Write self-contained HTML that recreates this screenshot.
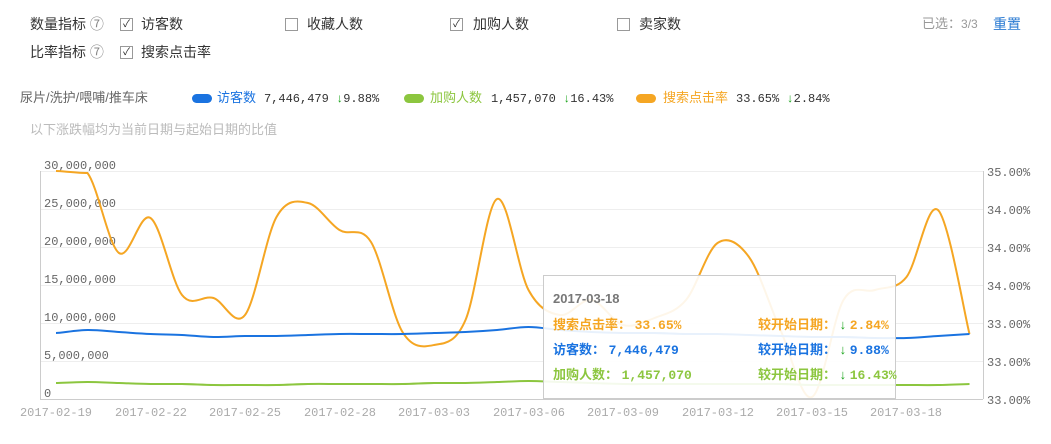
<!DOCTYPE html>
<html><head><meta charset="utf-8"><style>
body{margin:0;width:1051px;height:444px;background:#fff;overflow:hidden;position:relative;font-family:"Liberation Sans","Noto Sans CJK SC",sans-serif;}
.a{position:absolute;white-space:nowrap;font-size:14px;color:#333;line-height:16px}
.l{font-size:13px}
.cb{position:absolute;width:11px;height:11px;border:1px solid #999;background:#fff;font-size:10px;line-height:11px;text-align:center;color:#222}
.m{font-family:"Liberation Mono",monospace;font-size:12px}
.pill{position:absolute;width:20px;height:9px;border-radius:5px}
.g{color:#1aa31a}
</style></head><body>
<div class="a" style="left:30px;top:16px">数量指标 <span style="color:#888">⑦</span></div>
<div class="cb" style="left:120px;top:18px">✓</div><div class="a" style="left:141px;top:16px">访客数</div>
<div class="cb" style="left:285px;top:18px"></div><div class="a" style="left:307px;top:16px">收藏人数</div>
<div class="cb" style="left:450px;top:18px">✓</div><div class="a" style="left:473px;top:16px">加购人数</div>
<div class="cb" style="left:617px;top:18px"></div><div class="a" style="left:639px;top:16px">卖家数</div>
<div class="a" style="left:922px;top:16px;color:#999;font-size:13px">已选：<span style="font-size:12px">3/3</span></div>
<div class="a" style="left:993px;top:16px;color:#2a7ad2">重置</div>
<div class="a" style="left:30px;top:44px">比率指标 <span style="color:#888">⑦</span></div>
<div class="cb" style="left:120px;top:46px">✓</div><div class="a" style="left:141px;top:44px">搜索点击率</div>

<div class="a l" style="left:20px;top:90px;color:#666">尿片/洗护/喂哺/推车床</div>
<div class="pill" style="left:192px;top:94px;background:#1a73e0"></div>
<div class="a l" style="left:217px;top:90px;color:#1a73e0">访客数</div>
<div class="a m" style="left:264px;top:91px">7,446,479 <span class="g">↓</span>9.88%</div>
<div class="pill" style="left:404px;top:94px;background:#8cc63f"></div>
<div class="a l" style="left:430px;top:90px;color:#8cc63f">加购人数</div>
<div class="a m" style="left:491px;top:91px">1,457,070 <span class="g">↓</span>16.43%</div>
<div class="pill" style="left:636px;top:94px;background:#f5a623"></div>
<div class="a l" style="left:663px;top:90px;color:#f5a623">搜索点击率</div>
<div class="a m" style="left:736px;top:91px">33.65% <span class="g">↓</span>2.84%</div>
<div class="a l" style="left:30px;top:122px;color:#bbb">以下涨跌幅均为当前日期与起始日期的比值</div>

<svg width="1051" height="444" style="position:absolute;left:0;top:0" font-family="Liberation Mono,monospace" font-size="12" fill="#666">
<g stroke="#eee" stroke-width="1">
<line x1="40" y1="171.5" x2="983" y2="171.5"/><line x1="40" y1="209.5" x2="983" y2="209.5"/><line x1="40" y1="247.5" x2="983" y2="247.5"/><line x1="40" y1="285.5" x2="983" y2="285.5"/><line x1="40" y1="323.5" x2="983" y2="323.5"/><line x1="40" y1="361.5" x2="983" y2="361.5"/>
</g>
<g stroke="#ccc"><line x1="40.5" y1="171" x2="40.5" y2="399"/><line x1="983.5" y1="171" x2="983.5" y2="399"/><line x1="40" y1="399.5" x2="983" y2="399.5"/></g>
<g><text x="44" y="169">30,000,000</text><text x="44" y="207">25,000,000</text><text x="44" y="245">20,000,000</text><text x="44" y="283">15,000,000</text><text x="44" y="321">10,000,000</text><text x="44" y="359">5,000,000</text><text x="44" y="397">0</text></g>
<g><text x="987" y="176">35.00%</text><text x="987" y="214">34.00%</text><text x="987" y="252">34.00%</text><text x="987" y="290">34.00%</text><text x="987" y="328">33.00%</text><text x="987" y="366">33.00%</text><text x="987" y="404">33.00%</text></g>
<g fill="#aaa" text-anchor="middle"><text x="56" y="416">2017-02-19</text><text x="151" y="416">2017-02-22</text><text x="245" y="416">2017-02-25</text><text x="340" y="416">2017-02-28</text><text x="434" y="416">2017-03-03</text><text x="529" y="416">2017-03-06</text><text x="623" y="416">2017-03-09</text><text x="718" y="416">2017-03-12</text><text x="812" y="416">2017-03-15</text><text x="906" y="416">2017-03-18</text></g>
<path id="po" fill="none" stroke="#f5a623" stroke-width="2"/>
<path id="pb" fill="none" stroke="#1a73e0" stroke-width="2"/>
<path id="pg" fill="none" stroke="#8cc63f" stroke-width="2"/>
<rect x="543.5" y="275.5" width="352" height="123" fill="rgba(255,255,255,0.9)" stroke="#ccc"/>
<g font-family="Liberation Sans,Noto Sans CJK SC,sans-serif" font-size="13" font-weight="bold">
<text x="553" y="303" fill="#777">2017-03-18</text>
<text x="553" y="329" fill="#f5a623">搜索点击率：  <tspan font-family="Liberation Mono">33.65%</tspan></text>
<text x="553" y="354" fill="#1a73e0">访客数：  <tspan font-family="Liberation Mono">7,446,479</tspan></text>
<text x="553" y="379" fill="#8cc63f">加购人数：  <tspan font-family="Liberation Mono">1,457,070</tspan></text>
<text x="758" y="329" fill="#f5a623">较开始日期：  <tspan fill="#1aa31a">↓</tspan> <tspan font-family="Liberation Mono">2.84%</tspan></text>
<text x="758" y="354" fill="#1a73e0">较开始日期：  <tspan fill="#1aa31a">↓</tspan> <tspan font-family="Liberation Mono">9.88%</tspan></text>
<text x="758" y="379" fill="#8cc63f">较开始日期：  <tspan fill="#1aa31a">↓</tspan> <tspan font-family="Liberation Mono">16.43%</tspan></text>
</g>
</svg>
<script>
function cr(ys){var p=ys.map(function(y,i){return[56+31.5*i,y]});var d="M"+p[0];for(var i=0;i<p.length-1;i++){var a=p[i-1]||p[i],b=p[i],c=p[i+1],e=p[i+2]||c;var k=(i==0)?0:1,k2=(i==0)?0:1;d+=" C"+(b[0]+(c[0]-a[0])/6)+","+(b[1]+k*(c[1]-a[1])/6)+" "+(c[0]-(e[0]-b[0])/6)+","+(c[1]-k2*(e[1]-b[1])/6)+" "+c[0]+","+c[1];}return d;}
document.getElementById("po").setAttribute("d",cr([171,173,253,218,295,298,315,217,203,230,242,332,345,320,199,290,315,300,325,318,300,243,257,330,397,300,290,277,210,334]));
document.getElementById("pb").setAttribute("d",cr([333,330,332,334,335,337,336,336,335,334,334,334,333,332,330,327,330,332,333,333,334,334,335,336,337,337,338,338,336,334]));
document.getElementById("pg").setAttribute("d",cr([383,382,383,384,384,385,385,385,384,384,384,384,383,383,382,381,382,383,384,384,384,384,384,384,385,385,385,385,385,384]));
</script>
</body></html>
